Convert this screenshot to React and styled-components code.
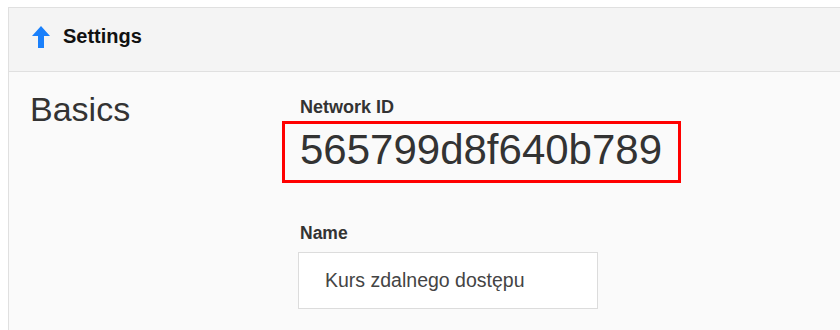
import React from 'react';
import styled, { createGlobalStyle } from 'styled-components';

const GlobalStyle = createGlobalStyle`
    html, body {
        margin: 0;
        padding: 0;
        background: #ffffff;
        font-family: "Liberation Sans", Arial, sans-serif;
    }
    #root {
        width: 840px;
        height: 330px;
        overflow: hidden;
    }
`;

const Page = styled.div`
    padding: 7px 0 0 8px;
    height: 100%;
    box-sizing: border-box;
`;

const Panel = styled.section`
    width: 900px;
    height: 400px;
    border: 1px solid #e0e0e0;
    background: #fafafa;
`;

const PanelHeader = styled.header`
    display: flex;
    align-items: center;
    gap: 13px;
    height: 64px;
    box-sizing: border-box;
    padding: 0 0 6px 23px;
    background: #f4f4f4;
    border-bottom: 1px solid #e0e0e0;

    h2 {
        margin: 0;
        font-size: 20px;
        font-weight: 700;
        color: #111;
    }
`;

const PanelBody = styled.div`
    display: flex;
    padding: 18px 0 0 21px;
`;

const SectionTitle = styled.h1`
    width: 270px;
    margin: 0;
    font-size: 34px;
    font-weight: 400;
    line-height: 39px;
    color: #333;
`;

const Fields = styled.div`
    display: flex;
    flex-direction: column;
    padding-top: 7px;
`;

const Label = styled.label`
    display: block;
    font-size: ${(p) => p.size || 17}px;
    font-weight: 700;
    line-height: 21px;
    color: #333;
    margin-bottom: ${(p) => p.gap || 0}px;
`;

const IdValue = styled.div`
    margin-left: -18px;
    width: 378px;
    padding: 2px 0 6px 15px;
    border: 3px solid #ff0000;
    font-size: 42px;
    line-height: 48px;
    color: #333;
`;

const Field = styled.div`
    margin-top: ${(p) => p.offset}px;
`;

const TextInput = styled.div`
    width: 300px;
    height: 57px;
    box-sizing: border-box;
    margin-left: -2px;
    padding-left: 26px;
    display: flex;
    align-items: center;
    background: #ffffff;
    border: 1px solid #dcdcdc;
    font-size: 19.5px;
    color: #444;
`;

const UpArrow = () => (
    <svg width="18" height="22" viewBox="0 0 18 22">
        <path d="M9 0 L18 10 L12 10 L12 22 L6 22 L6 10 L0 10 Z" fill="#1a80fb" />
    </svg>
);

const App = () => {
    return (
        <>
            <GlobalStyle />
            <Page>
                <Panel>
                    <PanelHeader>
                        <UpArrow />
                        <h2>Settings</h2>
                    </PanelHeader>
                    <PanelBody>
                        <SectionTitle>Basics</SectionTitle>
                        <Fields>
                            <Label size={18} gap={3}>Network ID</Label>
                            <IdValue>565799d8f640b789</IdValue>
                            <Field offset={40}>
                                <Label size={17.5} gap={8}>Name</Label>
                                <TextInput>Kurs zdalnego dostępu</TextInput>
                            </Field>
                        </Fields>
                    </PanelBody>
                </Panel>
            </Page>
        </>
    );
};

export default App;
